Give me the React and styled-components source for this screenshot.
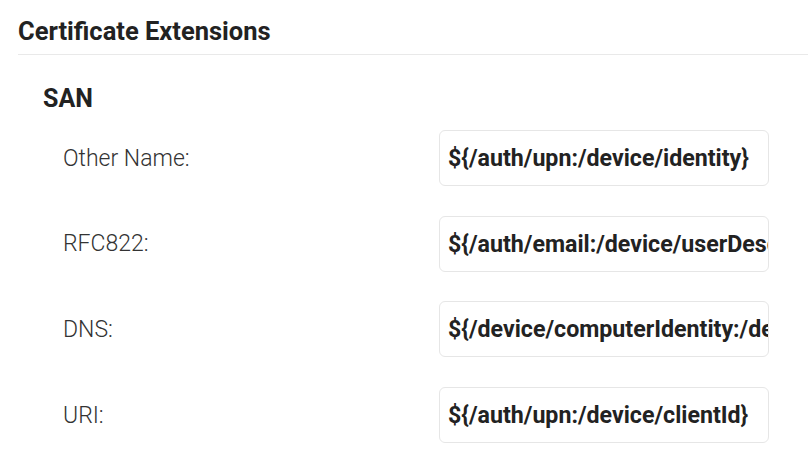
import React from 'react';
import styled, { createGlobalStyle } from 'styled-components';

const GlobalStyle = createGlobalStyle`
  body {
    margin: 0;
    background: #fff;
    font-family: Roboto, "Liberation Sans", sans-serif;
    color: #222;
  }
`;

const Page = styled.div`
  padding-left: 18px;
  padding-top: 14px;
`;

const Title = styled.h3`
  margin: 0;
  font-size: 25.5px;
  font-weight: 700;
  line-height: 34px;
  padding-bottom: 6px;
  border-bottom: 1px solid #e9e9e9;
`;

const Section = styled.div`
  padding-left: 25px;
`;

const SectionTitle = styled.h4`
  margin: 0;
  padding-top: 28px;
  font-size: 25px;
  font-weight: 700;
  line-height: 32px;
`;

const Rows = styled.div`
  padding-left: 20px;
  padding-top: 15px;
  display: flex;
  flex-direction: column;
  gap: 29.7px;
`;

const Row = styled.div`
  display: grid;
  grid-template-columns: 376px 330px;
  align-items: center;
`;

const Label = styled.span`
  font-size: 23px;
  font-weight: 300;
  color: #333;
`;

const Field = styled.div`
  height: 56px;
  box-sizing: border-box;
  border: 1px solid #e6e6e6;
  border-radius: 6px;
  padding: 0 0 0 8px;
  display: flex;
  align-items: center;
  overflow: hidden;
  white-space: nowrap;
  font-size: 23.2px;
  font-weight: 700;
  color: #222;
`;

const san = [
  { label: 'Other Name:', value: '${/auth/upn:/device/identity}' },
  { label: 'RFC822:', value: '${/auth/email:/device/userDescription}' },
  { label: 'DNS:', value: '${/device/computerIdentity:/device/dns}' },
  { label: 'URI:', value: '${/auth/upn:/device/clientId}' },
];

export default function App() {
  return (
    <Page>
      <GlobalStyle />
      <Title>Certificate Extensions</Title>
      <Section>
        <SectionTitle>SAN</SectionTitle>
        <Rows>
          {san.map((r) => (
            <Row key={r.label}>
              <Label>{r.label}</Label>
              <Field>{r.value}</Field>
            </Row>
          ))}
        </Rows>
      </Section>
    </Page>
  );
}
